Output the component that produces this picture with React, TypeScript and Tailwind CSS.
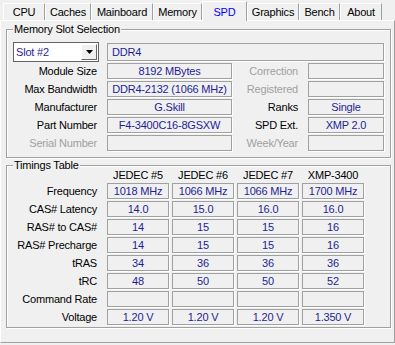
import React from "react";

const TABS = [
  { name: "CPU", w: "w-[42px]" },
  { name: "Caches", w: "w-[46px]" },
  { name: "Mainboard", w: "w-[62px]" },
  { name: "Memory", w: "w-[49px]" },
  { name: "SPD", w: "w-[45px]", active: true },
  { name: "Graphics", w: "w-[52px]" },
  { name: "Bench", w: "w-[41px]" },
  { name: "About", w: "w-[42px]" },
];

const SLOT_ROWS = [
  { label: "Module Size", value: "8192 MBytes", label2: "Correction", value2: "", dim2: true },
  { label: "Max Bandwidth", value: "DDR4-2132 (1066 MHz)", label2: "Registered", value2: "", dim2: true },
  { label: "Manufacturer", value: "G.Skill", label2: "Ranks", value2: "Single" },
  { label: "Part Number", value: "F4-3400C16-8GSXW", label2: "SPD Ext.", value2: "XMP 2.0" },
  { label: "Serial Number", value: "", dim: true, label2: "Week/Year", value2: "", dim2: true },
];

const HEADERS = ["JEDEC #5", "JEDEC #6", "JEDEC #7", "XMP-3400"];

const TIMINGS: [string, string[]][] = [
  ["Frequency", ["1018 MHz", "1066 MHz", "1066 MHz", "1700 MHz"]],
  ["CAS# Latency", ["14.0", "15.0", "16.0", "16.0"]],
  ["RAS# to CAS#", ["14", "15", "15", "16"]],
  ["RAS# Precharge", ["14", "15", "15", "16"]],
  ["tRAS", ["34", "36", "36", "36"]],
  ["tRC", ["48", "50", "50", "52"]],
  ["Command Rate", ["", "", "", ""]],
  ["Voltage", ["1.20 V", "1.20 V", "1.20 V", "1.350 V"]],
];

function Field({ children, className = "" }: { children?: React.ReactNode; className?: string }) {
  return (
    <div
      className={`h-[16px] border border-[#a0a0a0] shadow-[1px_1px_0_#ffffff] flex items-center justify-center leading-[14px] text-[#1e1e96] whitespace-nowrap overflow-hidden ${className}`}
    >
      {children}
    </div>
  );
}

function Label({ children, dim, className = "w-[90px]" }: { children: React.ReactNode; dim?: boolean; className?: string }) {
  return (
    <div className={`${className} text-right whitespace-nowrap leading-[14px] ${dim ? "text-[#a0a0a0]" : "text-black"}`}>
      {children}
    </div>
  );
}

export default function App() {
  return (
    <div className="w-[395px] h-[345px] bg-[#f0f0f0] overflow-hidden font-['Liberation_Sans',Arial,sans-serif] text-[11px] tracking-[-0.2px] text-black select-none">
      {/* tabs */}
      <div className="h-[20px] flex items-end pl-[3px]">
        {TABS.map((t) =>
          t.active ? (
            <div
              key={t.name}
              className={`${t.w} relative z-10 h-[20px] -mb-[1px] bg-[#f0f0f0] border-l border-t border-r border-l-white border-t-white border-r-[#a0a0a0] text-center pt-[4px] leading-[13px] text-[#0000ff]`}
            >
              {t.name}
            </div>
          ) : (
            <div
              key={t.name}
              className={`${t.w} h-[17px] bg-[#f0f0f0] border-l border-t border-r border-l-white border-t-white border-r-[#a0a0a0] text-center pt-[2px] leading-[13px]`}
            >
              {t.name}
            </div>
          )
        )}
      </div>

      {/* panel */}
      <div className="w-[395px] h-[323px] border border-l-white border-t-white border-r-[#a0a0a0] border-b-[#a0a0a0] pl-[5px] pt-[2px]">
        {/* Memory Slot Selection */}
        <fieldset className="w-[385px] border border-[#a0a0a0] shadow-[1px_1px_0_#ffffff,inset_1px_1px_0_#ffffff] pt-[6px] pb-[6px]">
          <legend className="ml-[6px] px-[1px] leading-[13px] bg-[#f0f0f0]">Memory Slot Selection</legend>

          <div className="h-[20px] flex items-center">
            <div className="ml-[6px] w-[86px] h-[20px] bg-white border border-[#646464] flex items-center">
              <span className="flex-1 pl-[2px] text-[#1e1e96] leading-[14px]">Slot #2</span>
              <div className="w-[16px] h-[16px] mr-[1px] bg-[#f0f0f0] border border-l-white border-t-white border-r-[#696969] border-b-[#696969] flex items-center justify-center">
                <svg width="7" height="4" viewBox="0 0 7 4">
                  <path d="M0 0h7L3.5 4z" fill="#000" />
                </svg>
              </div>
            </div>
            <Field className="ml-[8px] w-[277px] h-[18px] !justify-start pl-[4px]">DDR4</Field>
          </div>

          <div className="mt-[1px] flex flex-col gap-[2px]">
            {SLOT_ROWS.map((r) => (
              <div key={r.label} className="h-[16px] flex items-center">
                <Label dim={r.dim}>{r.label}</Label>
                <Field className="ml-[10px] w-[125px]">{r.value}</Field>
                <Label dim={r.dim2} className="w-[66px]">
                  {r.label2}
                </Label>
                <Field className="ml-[10px] w-[76px]">{r.value2}</Field>
              </div>
            ))}
          </div>
        </fieldset>

        {/* Timings Table */}
        <fieldset className="mt-[1px] w-[385px] border border-[#a0a0a0] shadow-[1px_1px_0_#ffffff,inset_1px_1px_0_#ffffff] pb-[2px]">
          <legend className="ml-[6px] px-[1px] leading-[13px] bg-[#f0f0f0]">Timings Table</legend>

          <div className="-mt-[3px] h-[13px] flex items-center">
            <div className="w-[90px]" />
            <div className="ml-[10px] flex gap-[3px]">
              {HEADERS.map((h) => (
                <div key={h} className="w-[62px] text-center leading-[13px] whitespace-nowrap">
                  {h}
                </div>
              ))}
            </div>
          </div>

          <div className="mt-[1px] flex flex-col gap-[2px]">
            {TIMINGS.map(([label, vals]) => (
              <div key={label} className="h-[16px] flex items-center">
                <Label>{label}</Label>
                <div className="ml-[10px] flex gap-[3px]">
                  {vals.map((v, i) => (
                    <Field key={i} className="w-[62px]">
                      {v}
                    </Field>
                  ))}
                </div>
              </div>
            ))}
          </div>
        </fieldset>
      </div>
    </div>
  );
}
